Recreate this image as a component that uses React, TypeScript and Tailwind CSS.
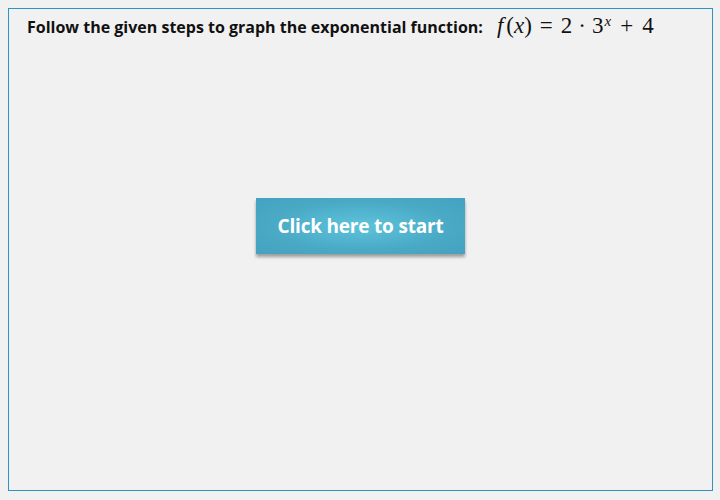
export default function App() {
  return (
    <div className="w-[720px] h-[500px] bg-[#f1f1f1] pt-2 pl-2" style={{ fontFamily: '"Open Sans", sans-serif' }}>
      <div className="w-[705px] h-[483px] border border-[#3592bb] bg-[#f1f1f1] shadow-[inset_1px_1px_0_#e4f6fb] flex flex-col">
        <div className="flex items-baseline pl-[18px] pt-0 h-[40px]">
          <span className="text-[16px] font-bold text-[#111]">
            Follow the given steps to graph the exponential function:
          </span>
          <span className="ml-[14px] text-[23px] text-[#111]" style={{ fontFamily: '"Liberation Serif", "DejaVu Serif", serif' }}>
            <i>f</i>
            <span className="ml-[3px]">(</span>
            <i>x</i>
            <span>)</span>
            <span className="mx-[8px]">=</span>
            <span>2</span>
            <span className="mx-[6px]">·</span>
            <span>3</span>
            <sup className="text-[15px] italic top-[-0.5em] ml-[1px]">x</sup>
            <span className="mx-[9px]">+</span>
            <span>4</span>
          </span>
        </div>
        <div className="flex justify-center pt-[149px]">
          <button className="w-[209px] h-[56px] text-white text-[19px] font-bold tracking-[-0.2px] bg-[radial-gradient(ellipse_at_center,#5ec3da_0%,#4aaac6_60%,#43a2bf_100%)] shadow-[0_3px_3px_rgba(0,0,0,0.35)]">
            Click here to start
          </button>
        </div>
      </div>
    </div>
  );
}
